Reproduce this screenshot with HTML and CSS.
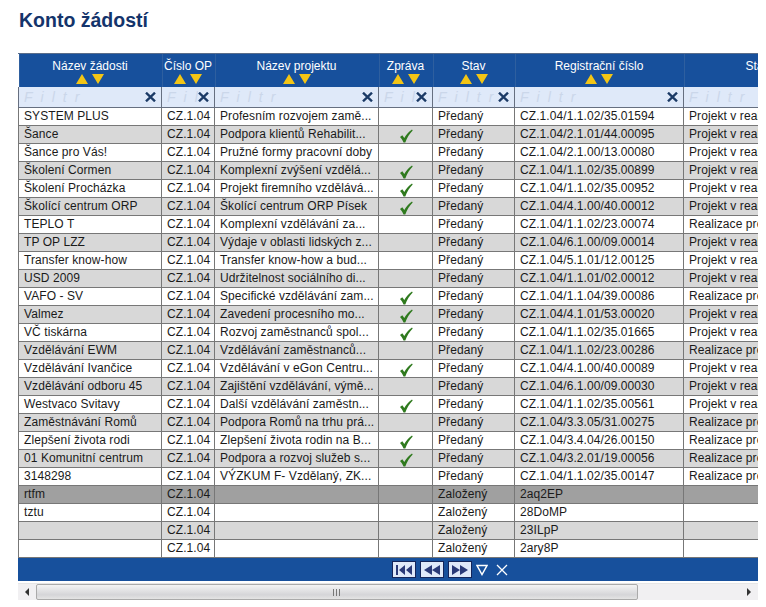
FILE: index.html
```html
<!DOCTYPE html>
<html lang="cs">
<head>
<meta charset="utf-8">
<title>Konto žádostí</title>
<link rel="stylesheet" href="styles.css">
</head>
<body>
<h1 class="title">Konto žádostí</h1>
<div class="grid">
<div class="viewport">
<table class="data">
<colgroup>
<col class="c1"><col class="c2"><col class="c3"><col class="c4"><col class="c5"><col class="c6"><col class="c7">
</colgroup>
<thead id="head"></thead>
<tbody id="body"></tbody>
</table>
</div>
<div class="pager">
<button class="pg" aria-label="První"><svg width="16" height="10" viewBox="0 0 16 10"><path d="M0 0h2v10H0zM9 0v10L3 5zM16 0v10L10 5z"/></svg></button>
<button class="pg" aria-label="Předchozí"><svg width="16" height="10" viewBox="0 0 16 10"><path d="M8 0v10L0 5zM16 0v10L8 5z"/></svg></button>
<button class="pg" aria-label="Další"><svg width="16" height="10" viewBox="0 0 16 10"><path d="M0 0v10l8-5zM8 0v10l8-5z"/></svg></button>
<svg class="tool funnel" width="12" height="12" viewBox="0 0 12 12"><path d="M1 1.500h10L6 10.500z" fill="none" stroke="#fff" stroke-width="1.500"/></svg>
<svg class="tool cross" width="12" height="12" viewBox="0 0 12 12"><path d="M1 1l10 10M11 1L1 11" fill="none" stroke="#fff" stroke-width="1.300"/></svg>
</div>
<div class="scrollbar">
<span class="btn"><span class="arrow left"></span></span>
<div class="thumb"><span class="grip"></span></div>
<span class="rest"></span>
<span class="btn"><span class="arrow right"></span></span>
</div>
</div>
<script src="app.js"></script>
</body>
</html>
```
FILE: app.js
```js
const heads = ["Název žádosti", "Číslo OP", "Název projektu", "Zpráva", "Stav", "Registrační číslo", "Stav projektu"];
const rows = [
["SYSTEM PLUS","Profesním rozvojem zamě...",0,"Předaný","CZ.1.04/1.1.02/35.01594","Projekt v realizaci"],
["Šance","Podpora klientů Rehabilit...",1,"Předaný","CZ.1.04/2.1.01/44.00095","Projekt v realizaci"],
["Šance pro Vás!","Pružné formy pracovní doby",0,"Předaný","CZ.1.04/2.1.00/13.00080","Projekt v realizaci"],
["Školení Cormen","Komplexní zvýšení vzdělá...",1,"Předaný","CZ.1.04/1.1.02/35.00899","Projekt v realizaci"],
["Školení Procházka","Projekt firemního vzdělává...",1,"Předaný","CZ.1.04/1.1.02/35.00952","Projekt v realizaci"],
["Školící centrum ORP","Školící centrum ORP Písek",1,"Předaný","CZ.1.04/4.1.00/40.00012","Projekt v realizaci"],
["TEPLO T","Komplexní vzdělávání za...",0,"Předaný","CZ.1.04/1.1.02/23.00074","Realizace projektu"],
["TP OP LZZ","Výdaje v oblasti lidských z...",0,"Předaný","CZ.1.04/6.1.00/09.00014","Projekt v realizaci"],
["Transfer know-how","Transfer know-how a bud...",0,"Předaný","CZ.1.04/5.1.01/12.00125","Projekt v realizaci"],
["USD 2009","Udržitelnost sociálního di...",0,"Předaný","CZ.1.04/1.1.01/02.00012","Projekt v realizaci"],
["VAFO - SV","Specifické vzdělávání zam...",1,"Předaný","CZ.1.04/1.1.04/39.00086","Realizace projektu"],
["Valmez","Zavedení procesního mo...",1,"Předaný","CZ.1.04/4.1.01/53.00020","Projekt v realizaci"],
["VČ tiskárna","Rozvoj zaměstnanců spol...",1,"Předaný","CZ.1.04/1.1.02/35.01665","Projekt v realizaci"],
["Vzdělávání EWM","Vzdělávání zaměstnanců...",0,"Předaný","CZ.1.04/1.1.02/23.00286","Realizace projektu"],
["Vzdělávání Ivančice","Vzdělávání v eGon Centru...",1,"Předaný","CZ.1.04/4.1.00/40.00089","Projekt v realizaci"],
["Vzdělávání odboru 45","Zajištění vzdělávání, výmě...",0,"Předaný","CZ.1.04/6.1.00/09.00030","Projekt v realizaci"],
["Westvaco Svitavy","Další vzdělávání zaměstn...",1,"Předaný","CZ.1.04/1.1.02/35.00561","Projekt v realizaci"],
["Zaměstnávání Romů","Podpora Romů na trhu prá...",0,"Předaný","CZ.1.04/3.3.05/31.00275","Realizace projektu"],
["Zlepšení života rodi","Zlepšení života rodin na B...",1,"Předaný","CZ.1.04/3.4.04/26.00150","Realizace projektu"],
["01 Komunitní centrum","Podpora a rozvoj služeb s...",1,"Předaný","CZ.1.04/3.2.01/19.00056","Realizace projektu"],
["3148298","VÝZKUM F- Vzdělaný, ZK...",0,"Předaný","CZ.1.04/1.1.02/35.00147","Realizace projektu"],
["rtfm","",0,"Založený","2aq2EP",""],
["tztu","",0,"Založený","28DoMP",""],
["","",0,"Založený","23ILpP",""],
["","",0,"Založený","2ary8P",""]
];
const up = '<svg class="sort" width="12" height="10" viewBox="0 0 12 10"><path d="M6 0l6 10H0z" fill="#f3c515"/></svg>';
const down = '<svg class="sort" width="12" height="10" viewBox="0 0 12 10"><path d="M0 0h12L6 10z" fill="#f3c515"/></svg>';
const check = '<svg class="check" width="14" height="14" viewBox="0 0 14 14"><path d="M1 8l2.300-1.800L5.300 9C7.300 5.500 9.800 2.500 13 .5l.7 1C10.700 4.500 8 8.500 6.300 13.500H4.500C3.700 11.500 2.500 9.500 1 8z" fill="#2f7a1e"/></svg>';
const x = '<svg class="clear" width="11" height="10" viewBox="0 0 11 10"><path d="M1 .7l9 8.600M10 .7L1 9.300" fill="none" stroke="#1b3a66" stroke-width="2.400"/></svg>';
document.getElementById("head").innerHTML =
  '<tr class="titles">' + heads.map(h => `<th><div class="hname">${h}</div><div class="sorts">${up}${down}</div></th>`).join("") + '</tr>' +
  '<tr class="filters">' + heads.map((h, i) => `<td><div class="filter"><span class="ph">Filtr</span>${i < 6 ? x : ""}</div></td>`).join("") + '</tr>';
document.getElementById("body").innerHTML = rows.map((r, i) => {
  const cls = i === 21 ? "sel" : i % 2 ? "alt" : "";
  return `<tr class="${cls}"><td>${r[0]}</td><td>CZ.1.04</td><td>${r[1]}</td><td class="mid">${r[2] ? check : ""}</td><td>${r[3]}</td><td>${r[4]}</td><td>${r[5]}</td></tr>`;
}).join("");
```
FILE: styles.css
```css
html, body { margin: 0; padding: 0; background: #fff; }
body { font-family: "Liberation Sans", Arial, sans-serif; font-size: 12px; color: #1a1a1a; padding: 10px 8px 0 18px; overflow: hidden; height: 597px; }
.title { margin: 0 0 23px 1px; font-size: 19.5px; line-height: 20px; font-weight: bold; color: #14346b; }
.grid { width: 740px; }
.viewport { overflow: hidden; width: 740px; border-top: 1px solid #5a6d8a; }
.data { border-collapse: collapse; table-layout: fixed; width: 859px; }
.c1 { width: 143px; } .c2 { width: 53px; } .c3 { width: 164px; } .c4 { width: 54px; } .c5 { width: 82px; } .c6 { width: 169px; } .c7 { width: 194px; }
.titles th { background: #17509c; color: #fff; font-weight: normal; height: 28px; padding: 5px 0 0; vertical-align: top; font-size: 12px; line-height: 14px; box-shadow: inset 1px 0 0 #2e5f9f; }
.sorts { display: flex; justify-content: center; gap: 4px; height: 10px; margin-top: 1px; }
.sort { display: block; }
.filters td { background: #dfe9f9; height: 20px; padding: 0; border: 1px solid #666f80; border-top: 0; }
.filter { display: flex; align-items: center; justify-content: space-between; padding: 0 5px 0 5px; height: 20px; overflow: hidden; }
.ph { font-style: italic; color: #cbd7ea; letter-spacing: 8px; font-size: 14px; white-space: nowrap; flex: 1; min-width: 0; overflow: hidden; }
.clear { flex: none; display: block; }
tbody td { height: 17px; padding: 0 5px; border: 1px solid #777; white-space: nowrap; overflow: hidden; line-height: 17px; background: #fff; letter-spacing: .08px; }
tbody tr.alt td { background: #d8d8d8; }
tbody tr.sel td { background: #a0a0a0; }
.mid { text-align: center; }
.check { display: block; margin: 2px auto 0; }
.pager { background: #17509c; height: 23px; display: flex; align-items: center; justify-content: center; gap: 4px; padding-left: 124px; box-sizing: border-box; }
.pg { width: 24px; height: 17px; padding: 0; background: #dfe9f9; border: 1px solid #14255a; display: flex; align-items: center; justify-content: center; }
.pg svg { fill: #2a3a78; display: block; }
.tool { display: block; }
.cross { margin-left: 4px; }
.scrollbar { margin-top: 2px; height: 17px; display: flex; align-items: stretch; background: #f1f0f2; border-top: 1px solid #e6e6e6; box-sizing: border-box; }
.btn { flex: none; width: 18px; display: flex; align-items: center; justify-content: center; }
.arrow { width: 0; height: 0; border-style: solid; }
.left { border-width: 4px 4px 4px 0; border-color: transparent #333 transparent transparent; }
.right { border-width: 4px 0 4px 4px; border-color: transparent transparent transparent #333; }
.thumb { flex: none; width: 600px; border: 1px solid #aaa; border-radius: 2px; background: linear-gradient(#f4f4f4, #d5d5d8 70%, #e4e4e4); display: flex; align-items: center; justify-content: center; }
.rest { flex: 1; }
.grip { width: 8px; height: 7px; background: repeating-linear-gradient(90deg, #777 0 1px, transparent 1px 3px); }
```
